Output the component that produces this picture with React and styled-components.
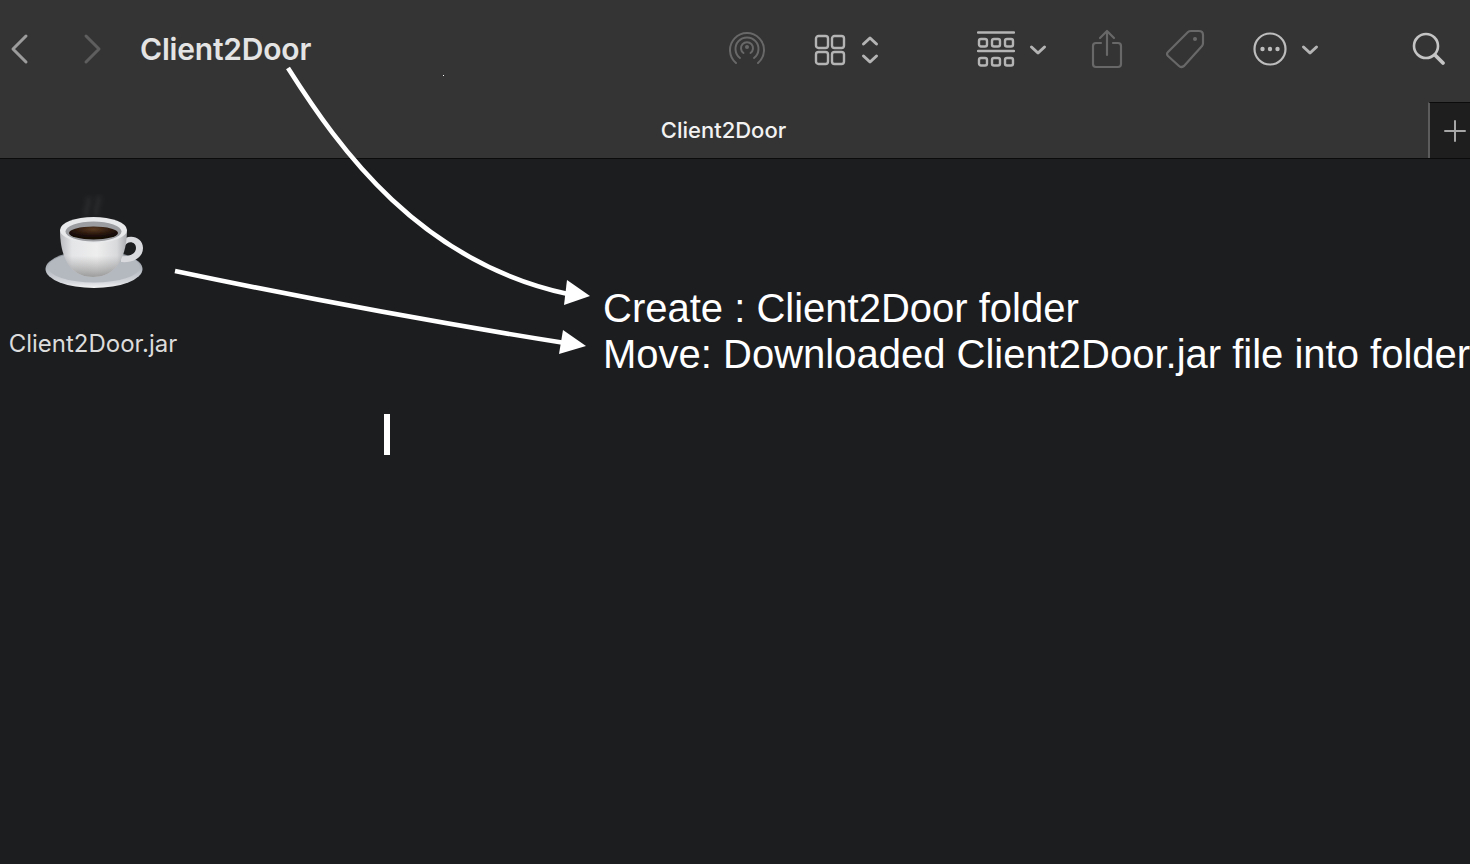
import React from "react";
import styled, { createGlobalStyle } from "styled-components";

const GlobalStyle = createGlobalStyle`
  html, body {
    margin: 0;
    padding: 0;
    background: #1c1d1f;
    overflow: hidden;
  }
`;

const Page = styled.div`
  position: relative;
  width: 1470px;
  height: 864px;
  overflow: hidden;
  background: #1c1d1f;
  font-family: Inter, "Liberation Sans", sans-serif;
`;

const Header = styled.header`
  height: 158px;
  background: #343434;
  border-bottom: 1px solid #0b0b0b;
  box-sizing: content-box;
  display: flex;
  flex-direction: column;
`;

const ToolBar = styled.div`
  height: 102px;
  display: flex;
  align-items: flex-start;
  padding-top: 27px;
  box-sizing: border-box;
`;

const NavBtn = styled.svg`
  display: block;
  width: 20px;
  height: 32px;
  margin-left: ${(p) => p.$left}px;
  margin-top: 6px;
  fill: none;
  stroke: ${(p) => p.$color};
  stroke-width: 3;
  stroke-linecap: round;
  stroke-linejoin: round;
`;

const Title = styled.h1`
  margin: 0 0 0 38px;
  width: 171px;
  font-size: 30px;
  line-height: 44px;
  font-weight: 600;
  letter-spacing: -0.2px;
  white-space: nowrap;
  color: #e4e4e4;
`;

const Icon = styled.svg`
  display: block;
  flex: none;
  margin-left: ${(p) => p.$left}px;
  margin-top: ${(p) => p.$top || 0}px;
  fill: none;
  stroke: ${(p) => p.$color || "#b4b4b4"};
  stroke-width: ${(p) => p.$weight || 2.4};
  stroke-linecap: round;
  stroke-linejoin: round;
`;

const TabBar = styled.div`
  height: 56px;
  display: flex;
`;

const Tab = styled.div`
  flex: 1;
  display: flex;
  align-items: center;
  justify-content: center;
  padding-left: 19px;
  font-size: 22px;
  font-weight: 500;
  color: #f2f2f2;
`;

const AddTab = styled.div`
  width: 42px;
  padding-left: 10px;
  background: #1e1e1e;
  border-left: 2px solid #5c5c5c;
  border-top: 1px solid #0b0b0b;
  box-sizing: border-box;
  display: flex;
  align-items: center;
  justify-content: center;
`;

const Files = styled.main`
  padding: 35px 0 0 9px;
  display: flex;
`;

const FileItem = styled.div`
  width: 168px;
  display: flex;
  flex-direction: column;
  align-items: center;
`;

const FileName = styled.span`
  margin-top: 36px;
  font-size: 24px;
  line-height: 28px;
  white-space: nowrap;
  color: #dcdcdc;
`;

const Arrows = styled.svg`
  position: absolute;
  left: 0;
  top: 0;
  pointer-events: none;
`;

const Notes = styled.div`
  position: absolute;
  left: 603px;
  top: 285px;
  font-family: "Liberation Sans", Arial, sans-serif;
  font-size: 40px;
  line-height: 46px;
  white-space: nowrap;
  color: #fff;
`;

const Caret = styled.div`
  position: absolute;
  left: 384px;
  top: 414px;
  width: 6px;
  height: 41px;
  background: #fff;
`;

const Speck = styled.div`
  position: absolute;
  left: 443px;
  top: 75px;
  width: 1px;
  height: 1px;
  background: #fff;
`;

const Chevron = ({ left, top }) => (
  <Icon $left={left} $top={top} $weight={3} width="18" height="12" viewBox="0 0 18 12">
    <path d="M2.5 3 L9 9 L15.5 3" />
  </Icon>
);

const CoffeeCup = () => (
  <svg width="104" height="100" viewBox="0 0 104 100">
    <defs>
      <linearGradient id="cupBody" x1="0" y1="0" x2="1" y2="0">
        <stop offset="0" stopColor="#b9bbbf" />
        <stop offset="0.18" stopColor="#e4e5e7" />
        <stop offset="0.55" stopColor="#eeeeee" />
        <stop offset="0.85" stopColor="#d8d9db" />
        <stop offset="1" stopColor="#a8aaae" />
      </linearGradient>
      <linearGradient id="cupShade" x1="0" y1="0" x2="0" y2="1">
        <stop offset="0.55" stopColor="#777" stopOpacity="0" />
        <stop offset="1" stopColor="#666" stopOpacity="0.6" />
      </linearGradient>
      <linearGradient id="saucer" x1="0" y1="0" x2="0" y2="1">
        <stop offset="0" stopColor="#7f858d" />
        <stop offset="0.55" stopColor="#b9bec5" />
        <stop offset="0.85" stopColor="#d5d8dc" />
        <stop offset="1" stopColor="#f3f3f3" />
      </linearGradient>
      <radialGradient id="coffee" cx="0.5" cy="0.2" r="0.7">
        <stop offset="0" stopColor="#5a3a22" />
        <stop offset="0.6" stopColor="#26140b" />
        <stop offset="1" stopColor="#120905" />
      </radialGradient>
      <filter id="soft" x="-20%" y="-20%" width="140%" height="140%">
        <feGaussianBlur stdDeviation="0.5" />
      </filter>
      <filter id="steam" x="-100%" y="-30%" width="300%" height="160%">
        <feGaussianBlur stdDeviation="2" />
      </filter>
    </defs>
    <g stroke="#fff" strokeOpacity="0.06" strokeWidth="5" fill="none" filter="url(#steam)">
      <path d="M46 22 C42 16 50 12 47 3" />
      <path d="M56 22 C52 14 60 10 57 2" />
    </g>
    <g filter="url(#soft)">
      <ellipse cx="53" cy="75" rx="48.5" ry="19" fill="url(#saucer)" />
      <ellipse cx="53" cy="73" rx="46" ry="15.5" fill="#b4b8bf" />
      <path d="M80 48 C86 39 102 42 102 54 C102 64 92 69 80 68 L80 62 C88 63 95 60 95 54 C95 47 86 46 83 53 Z" fill="#d9dadd" />
      <path d="M19 36 C19 58 26 83 52 83 C78 83 86 58 86 36 Z" fill="url(#cupBody)" />
      <path d="M19 36 C19 58 26 83 52 83 C78 83 86 58 86 36 Z" fill="url(#cupShade)" />
      <ellipse cx="52.5" cy="36" rx="33.5" ry="13" fill="#e8e9eb" />
      <ellipse cx="52.5" cy="37.5" rx="28" ry="10" fill="#9b9da1" />
      <ellipse cx="52.5" cy="39" rx="24.5" ry="6.5" fill="url(#coffee)" />
    </g>
  </svg>
);

export default function App() {
  return (
    <Page>
      <GlobalStyle />
      <Header>
        <ToolBar>
          <NavBtn $left={10} $color="#9c9c9c" viewBox="0 0 20 32">
            <path d="M16 3 L3 16 L16 29" />
          </NavBtn>
          <NavBtn $left={52} $color="#5e5e5e" viewBox="0 0 20 32">
            <path d="M4 3 L17 16 L4 29" />
          </NavBtn>
          <Title>Client2Door</Title>

          {/* airdrop */}
          <Icon $left={417} $top={3} $color="#686868" $weight={2} width="38" height="36" viewBox="0 0 38 36">
            <path d="M8 33 A17 17 0 1 1 30 33" />
            <path d="M12 28 A11.5 11.5 0 1 1 26 28" />
            <path d="M15.5 23 A6 6 0 1 1 22.5 23" />
            <circle cx="19" cy="17" r="2" fill="#686868" stroke="none" />
          </Icon>

          {/* icon view */}
          <Icon $left={48} $top={7} width="32" height="32" viewBox="0 0 32 32">
            <rect x="2" y="2" width="12" height="12" rx="2.5" />
            <rect x="18" y="2" width="12" height="12" rx="2.5" />
            <rect x="2" y="18" width="12" height="12" rx="2.5" />
            <rect x="18" y="18" width="12" height="12" rx="2.5" />
          </Icon>
          <Icon $left={15} $top={8} $weight={3} width="18" height="30" viewBox="0 0 18 30">
            <path d="M2.5 9 L9 3 L15.5 9" />
            <path d="M2.5 21 L9 27 L15.5 21" />
          </Icon>

          {/* group by */}
          <Icon $left={98} $top={3} $weight={2.4} width="38" height="38" viewBox="0 0 38 38">
            <path d="M1 2.5 H37" />
            <path d="M1 21 H37" />
            <rect x="2" y="9" width="8" height="7.5" rx="2" />
            <rect x="15" y="9" width="8" height="7.5" rx="2" />
            <rect x="28" y="9" width="8" height="7.5" rx="2" />
            <rect x="2" y="28" width="8" height="7.5" rx="2" />
            <rect x="15" y="28" width="8" height="7.5" rx="2" />
            <rect x="28" y="28" width="8" height="7.5" rx="2" />
          </Icon>
          <Chevron left={14} top={17} />

          {/* share */}
          <Icon $left={44} $top={2} $color="#686868" $weight={2.2} width="32" height="40" viewBox="0 0 32 40">
            <path d="M10 14 H5 Q2 14 2 17 V35 Q2 38 5 38 H27 Q30 38 30 35 V17 Q30 14 27 14 H22" />
            <path d="M16 26 V3" />
            <path d="M9 9 L16 2 L23 9" />
          </Icon>

          {/* tag */}
          <Icon $left={42} $top={2} $color="#686868" $weight={2.2} width="40" height="40" viewBox="0 0 40 40">
            <path d="M3 23 L23 3 Q24 2 26 2 H34 Q38 2 38 6 V14 Q38 16 37 17 L19 37 Q16 39 14 37 L3 27 Q1 25 3 23 Z" />
            <circle cx="30" cy="10" r="2" fill="#686868" stroke="none" />
          </Icon>

          {/* more */}
          <Icon $left={48} $top={5} $color="#bdbdbd" $weight={2.2} width="34" height="34" viewBox="0 0 34 34">
            <circle cx="17" cy="17" r="15.5" />
            <circle cx="9.5" cy="17" r="2.2" fill="#bdbdbd" stroke="none" />
            <circle cx="17" cy="17" r="2.2" fill="#bdbdbd" stroke="none" />
            <circle cx="24.5" cy="17" r="2.2" fill="#bdbdbd" stroke="none" />
          </Icon>
          <Chevron left={14} top={17} />

          {/* search */}
          <Icon $left={93} $top={5} $color="#c4c4c4" $weight={2.6} width="34" height="34" viewBox="0 0 34 34">
            <circle cx="14" cy="14" r="12" />
            <path d="M23 23 L31 31" strokeWidth="3.8" />
          </Icon>
        </ToolBar>
        <TabBar>
          <Tab>Client2Door</Tab>
          <AddTab>
            <Icon $left={0} $color="#a6a6a6" $weight={2} width="24" height="24" viewBox="0 0 24 24">
              <path d="M12 2 V22 M2 12 H22" />
            </Icon>
          </AddTab>
        </TabBar>
      </Header>
      <Files>
        <FileItem>
          <CoffeeCup />
          <FileName>Client2Door.jar</FileName>
        </FileItem>
      </Files>

      <Arrows width="1470" height="864" viewBox="0 0 1470 864">
        <path d="M288 68 C340 150 420 262 568 294" fill="none" stroke="#fff" strokeWidth="4.6" />
        <path d="M590 296 L567 280 L564 305 Z" fill="#fff" />
        <path d="M175 271 Q370 312 565 343" fill="none" stroke="#fff" strokeWidth="4.6" />
        <path d="M586 346 L563 330 L559 354 Z" fill="#fff" />
      </Arrows>
      <Speck />
      <Notes>
        <div>Create : Client2Door folder</div>
        <div>Move: Downloaded Client2Door.jar file into folder</div>
      </Notes>
      <Caret />
    </Page>
  );
}
